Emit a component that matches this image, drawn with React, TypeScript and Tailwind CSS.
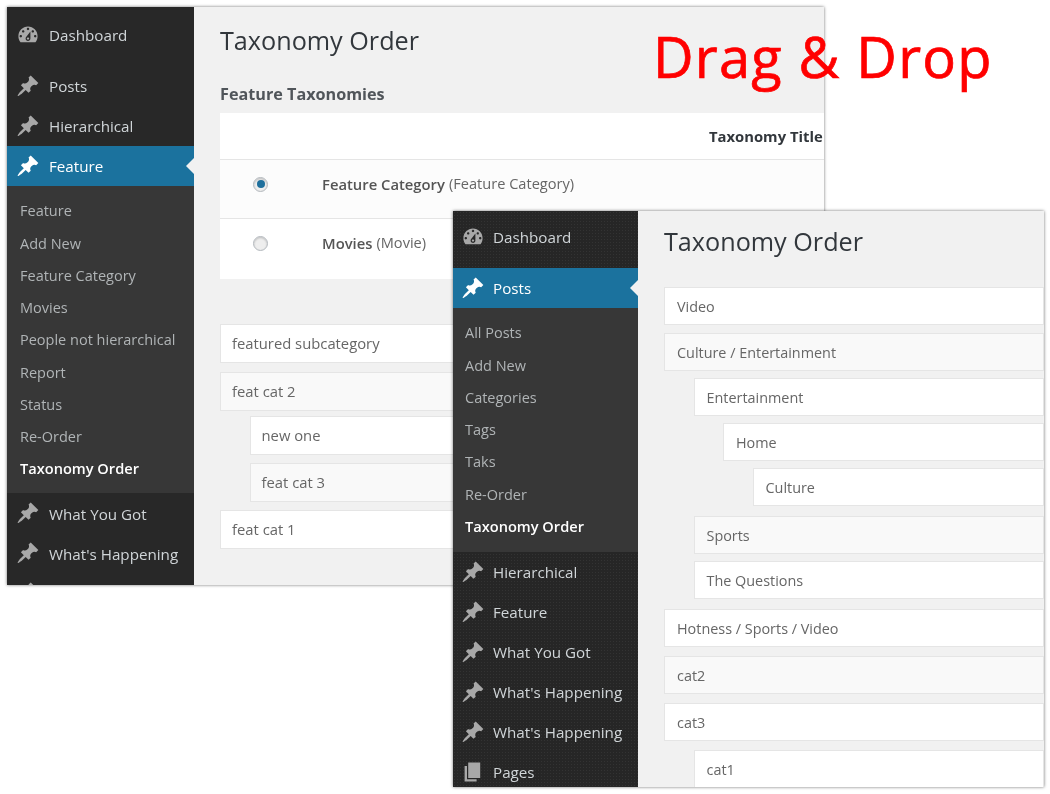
const PIN =
  "M10.44 3.02l1.82-1.82 6.36 6.35-1.83 1.82c-1.05-.68-2.48-.57-3.41.36l-.75.75c-.92.93-1.04 2.35-.35 3.41l-1.83 1.82-2.41-2.41-2.8 2.79c-.42.42-3.38 2.71-3.8 2.29s1.86-3.39 2.28-3.81l2.79-2.79L4.1 9.36l1.83-1.82c1.05.69 2.48.57 3.4-.36l.75-.75c.93-.92 1.05-2.35.36-3.41z";
const GAUGE =
  "M3.76 16h12.48c1.1-1.37 1.76-3.11 1.76-5 0-4.42-3.58-8-8-8s-8 3.58-8 8c0 1.89.66 3.63 1.76 5zM10 4c.55 0 1 .45 1 1s-.45 1-1 1-1-.45-1-1 .45-1 1-1zM6 6c.55 0 1 .45 1 1s-.45 1-1 1-1-.45-1-1 .45-1 1-1zm8 0c.55 0 1 .45 1 1s-.45 1-1 1-1-.45-1-1 .45-1 1-1zm-5.37 5.55L12 7v6c0 1.1-.9 2-2 2s-2-.9-2-2c0-.57.24-1.08.63-1.45zM4 10c.55 0 1 .45 1 1s-.45 1-1 1-1-.45-1-1 .45-1 1-1zm12 0c.55 0 1 .45 1 1s-.45 1-1 1-1-.45-1-1 .45-1 1-1zm-5 3c0-.55-.45-1-1-1s-1 .45-1 1 .45 1 1 1 1-.45 1-1z";
const PAGES = "M6 15V2h10v13H6zm-1 1h8v2H3V5h2v11z";

function MenuItem({ icon, label, active, tight }: { icon: string; label: string; active?: boolean; tight?: boolean }) {
  return (
    <div
      className={`relative flex h-10 shrink-0 items-center ${tight ? "gap-[8px] pl-[8px]" : "gap-[9px] pl-[9px]"} ${
        active ? "bg-[#1b729e] text-white" : "text-[#d0d5d8]"
      }`}
    >
      <svg viewBox="0 0 20 20" className={active ? "h-6 w-6 fill-white" : "h-6 w-6 fill-[#a8a8a8]"}>
        <path d={icon} />
      </svg>
      <span className="pt-[2px] text-[15.2px] leading-none">{label}</span>
      {active && (
        <span className="absolute right-0 top-[12px] border-y-[8px] border-r-[8px] border-y-transparent border-r-[#f1f1f1]" />
      )}
    </div>
  );
}

function SubMenu({ items, current, tight }: { items: string[]; current: string; tight?: boolean }) {
  return (
    <div className={`flex shrink-0 flex-col bg-[#373737] pt-[9px] ${tight ? "pb-[9px] pl-[12px]" : "pb-[8px] pl-[13px]"}`}>
      {items.map((item) => (
        <div
          key={item}
          className={
            item === current
              ? "flex h-[32.25px] items-center text-[14.6px] font-semibold text-white"
              : "flex h-[32.25px] items-center text-[14.5px] text-[#b0b4b6]"
          }
        >
          {item}
        </div>
      ))}
    </div>
  );
}

function ListRow({
  label,
  depth = 0,
  tint,
  mt,
  front,
}: {
  label: string;
  depth?: number;
  tint?: boolean;
  mt: string;
  front?: boolean;
}) {
  const indent = ["ml-0", "ml-[29.5px]", "ml-[59px]", "ml-[88.5px]"][depth];
  const size = front ? "h-[38px] pl-[12px] pt-[2px] text-[14.4px]" : "h-[39px] pl-[11px] text-[14.8px]";
  return (
    <div
      className={`flex items-center border border-[#e5e5e5] text-[#666] ${size} ${indent} ${mt} ${
        tint ? "bg-[#f9f9f9]" : "bg-white"
      }`}
    >
      {label}
    </div>
  );
}

function Radio({ checked }: { checked?: boolean }) {
  return (
    <span className="ml-[33px] mr-[54px] flex h-[15px] w-[15px] shrink-0 items-center justify-center rounded-full border border-[#b4b9be] bg-[#eee] shadow-[inset_0_1px_2px_rgba(0,0,0,0.2)]">
      {checked && <span className="h-[8px] w-[8px] rounded-full bg-[#1e6f9c]" />}
    </span>
  );
}

function BackWindow() {
  return (
    <div className="absolute left-[7px] top-[7px] flex h-[578px] w-[817px] overflow-hidden bg-[#f1f1f1] shadow-[0_0_3px_rgba(0,0,0,0.55)]">
      <aside className="flex w-[187px] shrink-0 flex-col bg-[#282828]">
        <div className="mb-[3px] flex h-[56px] shrink-0 items-center">
          <div className="w-full">
            <MenuItem icon={GAUGE} label="Dashboard" />
          </div>
        </div>
        <MenuItem icon={PIN} label="Posts" />
        <MenuItem icon={PIN} label="Hierarchical" />
        <MenuItem icon={PIN} label="Feature" active />
        <SubMenu
          current="Taxonomy Order"
          items={[
            "Feature",
            "Add New",
            "Feature Category",
            "Movies",
            "People not hierarchical",
            "Report",
            "Status",
            "Re-Order",
            "Taxonomy Order",
          ]}
        />
        <div className="shrink-0">
          <MenuItem icon={PIN} label="What You Got" />
          <MenuItem icon={PIN} label="What's Happening" />
          <MenuItem icon={PIN} label="" />
        </div>
      </aside>

      <main className="min-w-0 flex-1 pl-[26px] pt-[16px]">
        <h1 className="text-[25.2px] leading-[34px] text-[#32373c]">Taxonomy Order</h1>
        <h2 className="mt-[26px] text-[16.2px] font-bold leading-[22px] text-[#50555a]">Feature Taxonomies</h2>
        <div className="mt-[8px] w-[640px] bg-white text-[14.8px] text-[#666]">
          <div className="flex h-[47px] items-center border-b border-[#e5e5e5] pl-[489px] pt-[1px] font-bold text-[#32373c]">
            Taxonomy Title
          </div>
          <div className="flex h-[59px] items-center border-b border-[#e5e5e5] bg-[#fcfcfc] pb-[10px]">
            <Radio checked />
            <span className="font-semibold text-[#555]">Feature Category</span>
            <span className="ml-[4px] text-[14.6px]">(Feature Category)</span>
          </div>
          <div className="flex h-[60px] items-center pb-[12px]">
            <Radio />
            <span className="font-semibold text-[#555]">Movies</span>
            <span className="ml-[4px] text-[14.6px]">(Movie)</span>
          </div>
        </div>
        <ListRow label="featured subcategory" mt="mt-[45px]" />
        <ListRow label="feat cat 2" tint mt="mt-[9px]" />
        <ListRow label="new one" depth={1} mt="mt-[5px]" />
        <ListRow label="feat cat 3" depth={1} tint mt="mt-[8px]" />
        <ListRow label="feat cat 1" mt="mt-[8px]" />
      </main>
    </div>
  );
}

function FrontWindow() {
  return (
    <div className="absolute left-[453px] top-[211px] flex h-[576px] w-[591px] overflow-hidden bg-[#f1f1f1] shadow-[0_0_3px_rgba(0,0,0,0.55)]">
      <aside className="flex w-[185px] shrink-0 flex-col bg-[#262626] bg-[radial-gradient(#333_0.5px,transparent_0.6px)] bg-[length:3px_3px]">
        <div className="mb-[5px] flex h-[52px] shrink-0 items-center">
          <div className="w-full">
            <MenuItem icon={GAUGE} label="Dashboard" tight />
          </div>
        </div>
        <MenuItem icon={PIN} label="Posts" active tight />
        <SubMenu
          tight
          current="Taxonomy Order"
          items={["All Posts", "Add New", "Categories", "Tags", "Taks", "Re-Order", "Taxonomy Order"]}
        />
        <MenuItem icon={PIN} label="Hierarchical" tight />
        <MenuItem icon={PIN} label="Feature" tight />
        <MenuItem icon={PIN} label="What You Got" tight />
        <MenuItem icon={PIN} label="What's Happening" tight />
        <MenuItem icon={PIN} label="What's Happening" tight />
        <MenuItem icon={PAGES} label="Pages" tight />
      </aside>

      <main className="min-w-0 flex-1 pl-[26px] pt-[13px]">
        <h1 className="text-[25.2px] leading-[34px] text-[#32373c]">Taxonomy Order</h1>
        <ListRow front label="Video" mt="mt-[29px]" />
        <ListRow front label="Culture / Entertainment" tint mt="mt-[8px]" />
        <ListRow front label="Entertainment" depth={1} mt="mt-[7px]" />
        <ListRow front label="Home" depth={2} mt="mt-[7px]" />
        <ListRow front label="Culture" depth={3} mt="mt-[7px]" />
        <ListRow front label="Sports" depth={1} tint mt="mt-[10px]" />
        <ListRow front label="The Questions" depth={1} mt="mt-[7px]" />
        <ListRow front label="Hotness / Sports / Video" mt="mt-[10px]" />
        <ListRow front label="cat2" tint mt="mt-[9px]" />
        <ListRow front label="cat3" mt="mt-[9px]" />
        <ListRow front label="cat1" depth={1} mt="mt-[9px]" />
      </main>
    </div>
  );
}

export default function App() {
  return (
    <div className="relative h-[794px] w-[1050px] overflow-hidden bg-white font-['Open_Sans',sans-serif] blur-[0.4px]">
      <BackWindow />
      <div className="absolute left-[653px] top-[18px] text-[56px] leading-[76px] tracking-[1.2px] text-[#ff0000] [-webkit-text-stroke:0.7px_#ff0000]">
        Drag &amp; Drop
      </div>
      <FrontWindow />
    </div>
  );
}
